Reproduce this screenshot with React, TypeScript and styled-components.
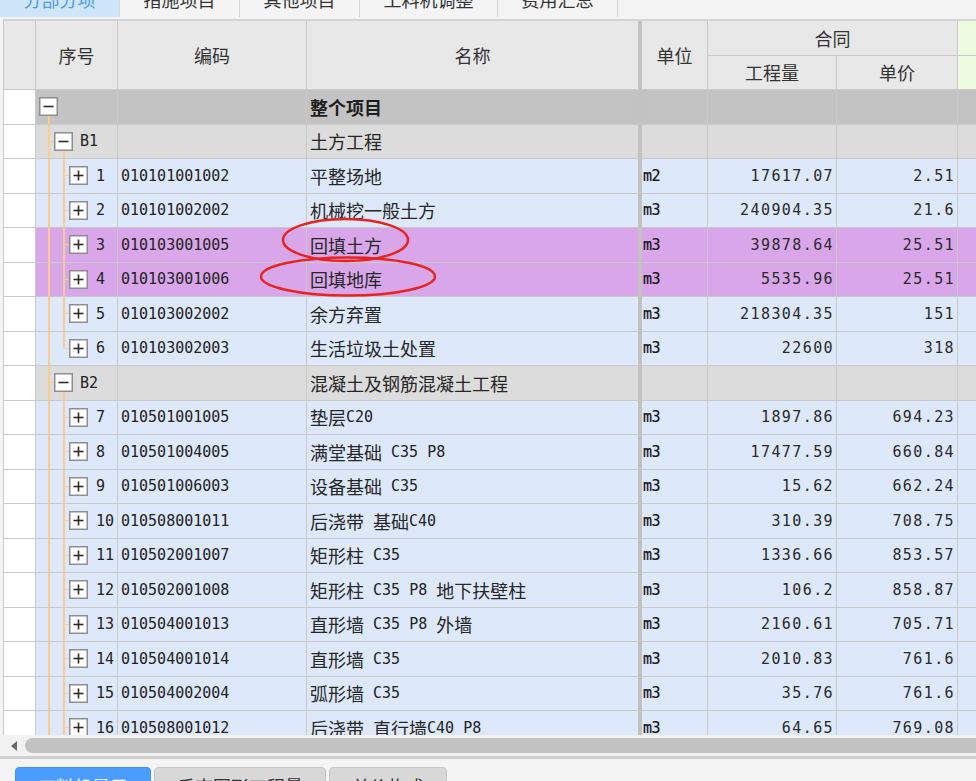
import React from 'react';
import styled, { createGlobalStyle } from 'styled-components';

const LINE = '#c9c9c9';
const ORANGE = '#fbcb8f';
const COLS = '32px 82px 189px 335px 66px 129px 121px minmax(0, 1fr)';

type Tone = 'root' | 'group' | 'item' | 'hl';
const TONES: Record<Tone, string> = {
  root: '#c3c3c3',
  group: '#dcdcdc',
  item: '#dde9fb',
  hl: '#d9a6ea',
};

const GlobalStyle = createGlobalStyle`
  html, body { margin: 0; padding: 0; background: #f4f4f4; overflow: hidden; }
  #root { width: 976px; height: 781px; }
`;

const Page = styled.div`
  position: relative;
  width: 976px;
  height: 781px;
  overflow: hidden;
  background: #f4f4f4;
  display: flex;
  flex-direction: column;
  font-family: "Noto Sans CJK SC", sans-serif;
  color: #222;
`;

const TabBar = styled.div`
  flex: none;
  display: flex;
  height: 39px;
  margin-top: -20px;
  background: #f4f4f4;
`;

const Tab = styled.div<{ $w: number; $active?: boolean }>`
  width: ${p => p.$w}px;
  height: 37px;
  box-sizing: border-box;
  border-right: 1px solid #d6d6d6;
  display: flex;
  align-items: center;
  justify-content: center;
  font-size: 18px;
  background: ${p => (p.$active ? '#cfe5fa' : '#f4f4f4')};
  color: ${p => (p.$active ? '#4b9ee9' : '#333')};
`;

const Grid = styled.div`
  flex: none;
  margin-left: 3px;
  border-left: 1px solid ${LINE};
  border-top: 2px solid #d4d4d4;
  background: #fff;
`;

const HeaderGrid = styled.div`
  display: grid;
  grid-template-columns: ${COLS};
  grid-template-rows: 34.5px 34.5px;
  background: #e8e8e8;
`;

const HeadCell = styled.div<{ $area: string; $thick?: boolean; $green?: boolean; $noRight?: boolean }>`
  grid-area: ${p => p.$area};
  box-sizing: border-box;
  border-right: ${p => (p.$noRight ? 'none' : p.$thick ? '4px solid #c2c2c2' : `1px solid ${LINE}`)};
  border-bottom: 1px solid ${LINE};
  display: flex;
  align-items: center;
  justify-content: center;
  font-size: 18px;
  color: #333;
  background: ${p => (p.$green ? '#eefbe1' : '#e8e8e8')};
`;

const Body = styled.div`
  height: 645px;
  overflow: hidden;
`;

const Row = styled.div<{ $tone: Tone }>`
  display: grid;
  grid-template-columns: ${COLS};
  height: 34.5px;
  background: ${p => TONES[p.$tone]};
`;

const Cell = styled.div<{ $thick?: boolean; $pad?: number }>`
  box-sizing: border-box;
  min-width: 0;
  border-right: ${p => (p.$thick ? '4px solid #c2c2c2' : `1px solid ${LINE}`)};
  border-bottom: 1px solid ${LINE};
  display: flex;
  align-items: center;
  padding-left: ${p => p.$pad ?? 3}px;
  font: 15px "DejaVu Sans Mono", "Noto Sans CJK SC", monospace;
  color: #222;
  white-space: pre;
  overflow: hidden;
`;

const RowNum = styled(Cell)`
  background: #fff;
`;

const UnitCell = styled(Cell)`
  font-size: 15px;
  letter-spacing: -0.6px;
  padding-left: 1px;
  color: #111;
  -webkit-text-stroke: 0.2px #111;
`;

const NumCell = styled(Cell)`
  justify-content: flex-end;
  padding-left: 0;
  padding-right: 2px;
  letter-spacing: 1.4px;
  color: #2a2a2a;
`;

const LastCell = styled.div`
  border-bottom: 1px solid ${LINE};
`;

const seg = (x: string, y: string, w: string, h: string) =>
  `linear-gradient(${ORANGE}, ${ORANGE}) ${x} ${y} / ${w} ${h} no-repeat`;

type Kind = 'root' | 'group' | 'item';

const treeLines = (kind: Kind, last?: boolean) => {
  if (kind === 'root') return seg('12px', 'calc(50% + 9px)', '2px', '50%');
  if (kind === 'group')
    return [
      seg('12px', '0', '2px', '100%'),
      seg('14px', '50%', '5px', '1px'),
      seg('27px', 'calc(50% + 9px)', '2px', '50%'),
    ].join(', ');
  return [
    seg('12px', '0', '2px', '100%'),
    last ? seg('27px', '0', '2px', '50%') : seg('27px', '0', '2px', '100%'),
    seg('29px', '50%', '4px', '1px'),
  ].join(', ');
};

const TreeCell = styled(Cell)<{ $kind: Kind; $last?: boolean }>`
  padding-left: ${p => (p.$kind === 'root' ? 3 : p.$kind === 'group' ? 18 : 33)}px;
  gap: ${p => (p.$kind === 'group' ? 7 : 8)}px;
  background: ${p => treeLines(p.$kind, p.$last)};
`;

const Han = styled.span<{ $bold?: boolean }>`
  font: ${p => (p.$bold ? 700 : 400)} 18px "Noto Sans CJK SC", sans-serif;
  color: ${p => (p.$bold ? '#1e1e1e' : '#262626')};
`;

const Latin = styled.span``;

const HScroll = styled.div`
  flex: none;
  height: 21px;
  display: flex;
  align-items: center;
  gap: 8px;
  padding-left: 11px;
  background: #f2f2f2;
`;

const ArrowLeft = styled.span`
  flex: none;
  width: 0;
  height: 0;
  border-top: 5px solid transparent;
  border-bottom: 5px solid transparent;
  border-right: 6px solid #6a6a6a;
`;

const Thumb = styled.div`
  flex: 1;
  height: 15px;
  border-radius: 8px;
  background: #c2c2c2;
  margin-right: -12px;
`;

const Divider = styled.div`
  flex: none;
  height: 3px;
  background: #d0d0d0;
`;

const ButtonBar = styled.div`
  flex: none;
  display: flex;
  gap: 3px;
  padding: 8px 0 0 15px;
  background: #f4f4f4;
`;

const Btn = styled.div<{ $primary?: boolean }>`
  height: 38px;
  box-sizing: border-box;
  padding: 0 22px;
  display: flex;
  align-items: center;
  font-size: 18px;
  border-radius: 4px 4px 0 0;
  background: ${p => (p.$primary ? '#4a9cfd' : '#d8d8d8')};
  color: ${p => (p.$primary ? '#fff' : '#333')};
  border: 1px solid ${p => (p.$primary ? '#3f93f5' : '#c6c6c6')};
`;

const Marks = styled.svg`
  position: absolute;
  left: 0;
  top: 0;
  pointer-events: none;
`;

const HAN_SPLIT = /([\u2E80-\u9FFF\uFF00-\uFFEF]+)/;
const HAN_TEST = /[\u2E80-\u9FFF\uFF00-\uFFEF]/;

const Mixed: React.FC<{ text: string; bold?: boolean }> = ({ text, bold }) => (
  <>
    {text
      .split(HAN_SPLIT)
      .filter(Boolean)
      .map((s, i) =>
        HAN_TEST.test(s) ? (
          <Han key={i} $bold={bold}>
            {s}
          </Han>
        ) : (
          <Latin key={i}>{s}</Latin>
        ),
      )}
  </>
);

const Toggle: React.FC<{ open?: boolean }> = ({ open }) => (
  <svg width="19" height="19" viewBox="0 0 19 19" style={{ flex: 'none' }}>
    <rect x="0.75" y="0.75" width="17.5" height="17.5" fill="#fff" stroke="#8e8e8e" strokeWidth="1.5" />
    <path d="M4.5 9.5h10" stroke="#2b2b2b" strokeWidth="1.6" />
    {!open && <path d="M9.5 4.5v10" stroke="#2b2b2b" strokeWidth="1.6" />}
  </svg>
);

type RowData = {
  kind: Kind;
  seq?: string;
  code?: string;
  name: string;
  unit?: string;
  qty?: string;
  price?: string;
  hl?: boolean;
  last?: boolean;
};

const rows: RowData[] = [
  { kind: 'root', name: '整个项目' },
  { kind: 'group', seq: 'B1', name: '土方工程' },
  { kind: 'item', seq: '1', code: '010101001002', name: '平整场地', unit: 'm2', qty: '17617.07', price: '2.51' },
  { kind: 'item', seq: '2', code: '010101002002', name: '机械挖一般土方', unit: 'm3', qty: '240904.35', price: '21.6' },
  { kind: 'item', seq: '3', code: '010103001005', name: '回填土方', unit: 'm3', qty: '39878.64', price: '25.51', hl: true },
  { kind: 'item', seq: '4', code: '010103001006', name: '回填地库', unit: 'm3', qty: '5535.96', price: '25.51', hl: true },
  { kind: 'item', seq: '5', code: '010103002002', name: '余方弃置', unit: 'm3', qty: '218304.35', price: '151' },
  { kind: 'item', seq: '6', code: '010103002003', name: '生活垃圾土处置', unit: 'm3', qty: '22600', price: '318', last: true },
  { kind: 'group', seq: 'B2', name: '混凝土及钢筋混凝土工程' },
  { kind: 'item', seq: '7', code: '010501001005', name: '垫层C20', unit: 'm3', qty: '1897.86', price: '694.23' },
  { kind: 'item', seq: '8', code: '010501004005', name: '满堂基础 C35 P8', unit: 'm3', qty: '17477.59', price: '660.84' },
  { kind: 'item', seq: '9', code: '010501006003', name: '设备基础 C35', unit: 'm3', qty: '15.62', price: '662.24' },
  { kind: 'item', seq: '10', code: '010508001011', name: '后浇带 基础C40', unit: 'm3', qty: '310.39', price: '708.75' },
  { kind: 'item', seq: '11', code: '010502001007', name: '矩形柱 C35', unit: 'm3', qty: '1336.66', price: '853.57' },
  { kind: 'item', seq: '12', code: '010502001008', name: '矩形柱 C35 P8 地下扶壁柱', unit: 'm3', qty: '106.2', price: '858.87' },
  { kind: 'item', seq: '13', code: '010504001013', name: '直形墙 C35 P8 外墙', unit: 'm3', qty: '2160.61', price: '705.71' },
  { kind: 'item', seq: '14', code: '010504001014', name: '直形墙 C35', unit: 'm3', qty: '2010.83', price: '761.6' },
  { kind: 'item', seq: '15', code: '010504002004', name: '弧形墙 C35', unit: 'm3', qty: '35.76', price: '761.6' },
  { kind: 'item', seq: '16', code: '010508001012', name: '后浇带 直行墙C40 P8', unit: 'm3', qty: '64.65', price: '769.08' },
];

const tabs = [
  { label: '分部分项', w: 120, active: true },
  { label: '措施项目', w: 120 },
  { label: '其他项目', w: 120 },
  { label: '工料机调整', w: 138 },
  { label: '费用汇总', w: 120 },
];

const toneOf = (r: RowData): Tone => (r.hl ? 'hl' : r.kind === 'item' ? 'item' : r.kind);

export default function App() {
  return (
    <>
      <GlobalStyle />
      <Page>
        <TabBar>
          {tabs.map(t => (
            <Tab key={t.label} $w={t.w} $active={t.active}>
              {t.label}
            </Tab>
          ))}
        </TabBar>

        <Grid>
          <HeaderGrid>
            <HeadCell $area="1 / 1 / 3 / 2" />
            <HeadCell $area="1 / 2 / 3 / 3">序号</HeadCell>
            <HeadCell $area="1 / 3 / 3 / 4">编码</HeadCell>
            <HeadCell $area="1 / 4 / 3 / 5" $thick>
              名称
            </HeadCell>
            <HeadCell $area="1 / 5 / 3 / 6">单位</HeadCell>
            <HeadCell $area="1 / 6 / 2 / 8">合同</HeadCell>
            <HeadCell $area="2 / 6 / 3 / 7">工程量</HeadCell>
            <HeadCell $area="2 / 7 / 3 / 8">单价</HeadCell>
            <HeadCell $area="1 / 8 / 2 / 9" $green $noRight />
            <HeadCell $area="2 / 8 / 3 / 9" $green $noRight />
          </HeaderGrid>

          <Body>
            {rows.map((r, i) => (
              <Row key={i} $tone={toneOf(r)}>
                <RowNum />
                <TreeCell $kind={r.kind} $last={r.last}>
                  <Toggle open={r.kind !== 'item'} />
                  {r.seq && <Latin>{r.seq}</Latin>}
                </TreeCell>
                <Cell>{r.code}</Cell>
                <Cell $thick>
                  <Mixed text={r.name} bold={r.kind === 'root'} />
                </Cell>
                <UnitCell>{r.unit}</UnitCell>
                <NumCell>{r.qty}</NumCell>
                <NumCell>{r.price}</NumCell>
                <LastCell />
              </Row>
            ))}
          </Body>
        </Grid>

        <HScroll>
          <ArrowLeft />
          <Thumb />
        </HScroll>
        <Divider />

        <ButtonBar>
          <Btn $primary>工料机显示</Btn>
          <Btn>反查图形工程量</Btn>
          <Btn>单价构成</Btn>
        </ButtonBar>

        <Marks width="976" height="781" viewBox="0 0 976 781">
          <ellipse cx="345.5" cy="240" rx="62.5" ry="21" fill="none" stroke="#e8231e" strokeWidth="2.5" />
          <ellipse cx="348" cy="276.5" rx="87" ry="19" fill="none" stroke="#e8231e" strokeWidth="2.5" />
        </Marks>
      </Page>
    </>
  );
}
